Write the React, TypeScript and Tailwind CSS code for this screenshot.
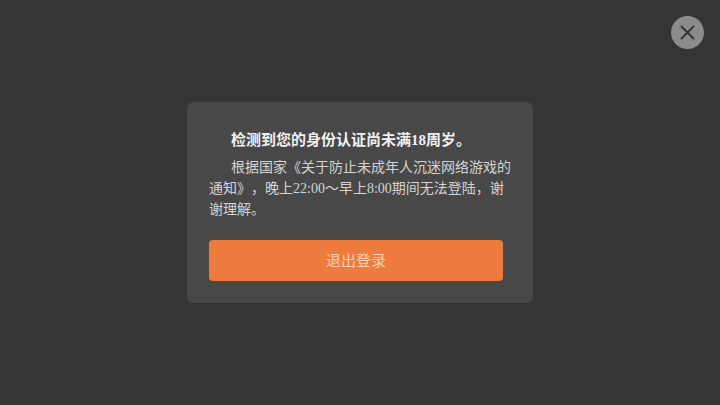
function CloseButton() {
  return (
    <button className="absolute right-[16px] top-[16px] flex h-[33px] w-[33px] items-center justify-center rounded-full bg-[#8c8c8c]">
      <svg width="15" height="15" viewBox="0 0 15 15" fill="none" stroke="#333333" strokeWidth="1.8" strokeLinecap="round">
        <path d="M1.5 1.5 13.5 13.5M13.5 1.5 1.5 13.5" />
      </svg>
    </button>
  )
}

export default function App() {
  return (
    <div className="relative flex h-[405px] w-[720px] items-start justify-center overflow-hidden bg-[#353535] font-['Liberation_Serif','Noto_Sans_CJK_SC',serif] [text-spacing-trim:space-all]">
      <CloseButton />

      {/* Minor protection notice */}
      <div className="mt-[102px] h-[201px] w-[346px] rounded-[6px] bg-[#484848] pl-[22px] pr-[20px] pt-[28px]">
        <h2 className="indent-[22px] text-[15px] font-bold leading-[21px] text-[#f0f0f0]">
          检测到您的身份认证尚未满18周岁。
        </h2>
        <p className="mt-[6px] indent-[22px] text-[14px] leading-[21px] text-[#d4d4d4]">
          根据国家《关于防止未成年人沉迷网络游戏的通知》，晚上22:00～早上8:00期间无法登陆，谢谢理解。
        </p>
        <button className="mt-[20px] h-[41px] w-[294px] rounded-[4px] bg-[#ee7b3e] pt-[1px] text-[15px] text-[#fbd2b2]">
          退出登录
        </button>
      </div>
    </div>
  )
}
